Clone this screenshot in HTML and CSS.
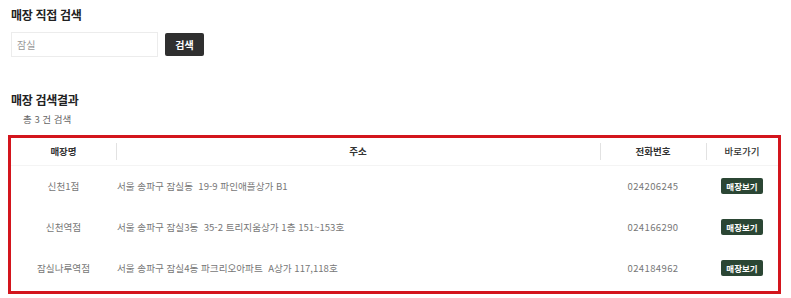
FILE: index.html
```html
<!DOCTYPE html>
<html lang="ko">
<head>
<meta charset="utf-8">
<link rel="stylesheet" href="styles.css">
</head>
<body>
<div class="page">
  <h2 class="title">매장 직접 검색</h2>
  <div class="search-row">
    <input class="search-input" type="text" placeholder="잠실">
    <button class="search-btn">검색</button>
  </div>

  <h2 class="title result-title">매장 검색결과</h2>
  <p class="count">총 3 건 검색</p>

  <div class="result-box">
    <table class="result-table">
      <thead>
        <tr>
          <th class="c-name">매장명</th>
          <th class="c-addr sep">주소</th>
          <th class="c-tel sep">전화번호</th>
          <th class="c-go sep light">바로가기</th>
        </tr>
      </thead>
      <tbody>
        <tr>
          <td class="c-name">신천1점</td>
          <td class="c-addr">서울 송파구 잠실동&nbsp; 19-9 파인애플상가 B1</td>
          <td class="c-tel">024206245</td>
          <td class="c-go"><span class="go-btn">매장보기</span></td>
        </tr>
        <tr>
          <td class="c-name">신천역점</td>
          <td class="c-addr">서울 송파구 잠실3동&nbsp; 35-2 트리지움상가 1층 151~153호</td>
          <td class="c-tel">024166290</td>
          <td class="c-go"><span class="go-btn">매장보기</span></td>
        </tr>
        <tr>
          <td class="c-name">잠실나루역점</td>
          <td class="c-addr">서울 송파구 잠실4동 파크리오아파트&nbsp; A상가 117,118호</td>
          <td class="c-tel">024184962</td>
          <td class="c-go"><span class="go-btn">매장보기</span></td>
        </tr>
      </tbody>
    </table>
  </div>
</div>
</body>
</html>
```

FILE: styles.css
```css
* { box-sizing: border-box; }

body {
  margin: 0;
  background: #fff;
  font-family: "Noto Sans CJK KR", "Noto Sans", sans-serif;
  color: #333;
}

.page {
  padding: 0 10px 0 8px;
}

.title {
  margin: 0;
  padding: 7px 0 0 3px;
  font-size: 12px;
  line-height: 16px;
  font-weight: 700;
  color: #222;
  letter-spacing: -0.3px;
}

.search-row {
  display: flex;
  align-items: center;
  margin-top: 9px;
  padding-left: 3px;
}

.search-input {
  width: 147px;
  height: 25px;
  border: 1px solid #ececec;
  padding: 0 5px;
  font-family: inherit;
  font-size: 10px;
  color: #333;
  outline: none;
}

.search-input::placeholder {
  color: #999;
}

.search-btn {
  margin-left: 7px;
  width: 39px;
  height: 23px;
  border: 0;
  border-radius: 2px;
  background: #2f2f2f;
  color: #fff;
  font-family: inherit;
  font-size: 10px;
  font-weight: 700;
  padding: 0;
}

.result-title {
  padding-top: 35px;
}

.count {
  margin: 4px 0 0;
  padding-left: 15px;
  font-size: 9.5px;
  line-height: 14px;
  color: #666;
}

.result-box {
  margin-top: 9px;
  border: 3px solid #d3151d;
  width: 773px;
}

.result-table {
  width: 100%;
  border-collapse: collapse;
  table-layout: fixed;
}

.result-table th {
  height: 27px;
  font-size: 9.5px;
  font-weight: 700;
  color: #333;
  text-align: center;
  position: relative;
  padding: 0;
  border-bottom: 1px solid #f4f4f4;
}

.result-table th.light {
  font-weight: 500;
}

.result-table th.sep::before {
  content: "";
  position: absolute;
  left: 0;
  top: 5px;
  height: 17px;
  border-left: 1px solid #e2e2e2;
}

.result-table td {
  height: 41px;
  font-size: 9.6px;
  color: #777;
  text-align: center;
  padding: 0;
  white-space: nowrap;
}

.result-table tbody tr:last-child td {
  height: 44px;
  padding-bottom: 3px;
}

.c-name { width: 105px; }
.c-tel { width: 106px; }
.c-go { width: 72px; }

.result-table td.c-addr {
  text-align: left;
  padding-left: 1px;
}

.result-table td.c-tel {
  font-size: 9.5px;
  letter-spacing: 0.4px;
}

.go-btn {
  display: inline-block;
  width: 42px;
  height: 16px;
  line-height: 16px;
  border-radius: 2px;
  background: #2b4634;
  color: #fff;
  font-size: 8.5px;
  font-weight: 700;
  text-align: center;
}
```
